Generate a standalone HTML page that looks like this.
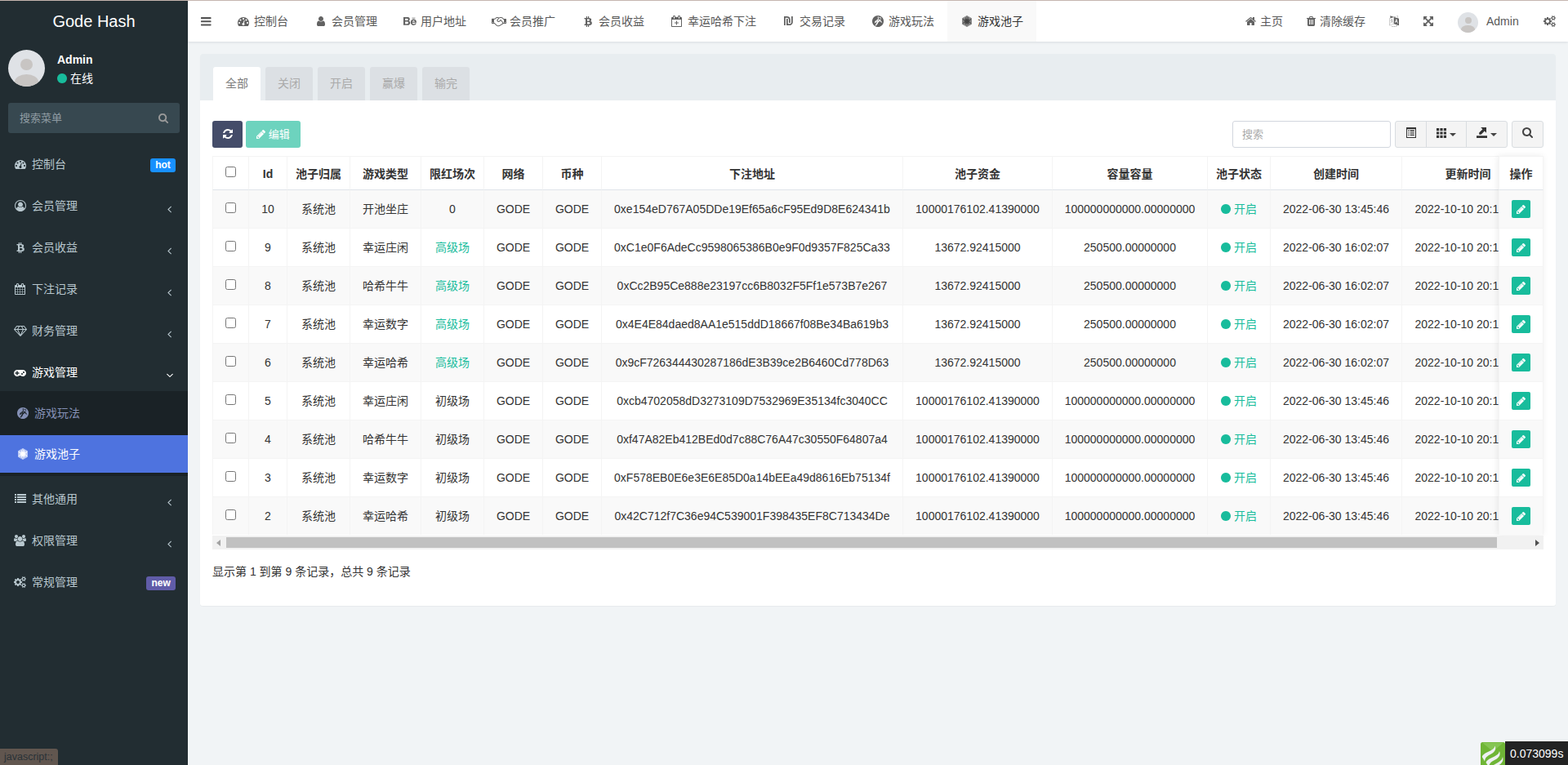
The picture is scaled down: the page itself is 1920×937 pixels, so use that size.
<!DOCTYPE html>
<html lang="zh-cn"><head><meta charset="utf-8"><title>Gode Hash</title>
<style>
*{box-sizing:border-box}
html,body{margin:0;padding:0}
body{width:1920px;height:937px;overflow:hidden;background:#f1f4f6;font-family:"Liberation Sans","Noto Sans CJK SC",sans-serif;font-size:14px;line-height:20px;color:#333;position:relative}
svg.i{display:inline-block;vertical-align:-2px;flex:none}
ul{list-style:none;margin:0;padding:0}
#topline{position:absolute;left:0;top:0;width:1920px;height:1px;background:#c5b5af;z-index:50}
/* sidebar */
#side{position:absolute;left:0;top:0;width:230px;height:937px;background:#222d32;color:#b8c7ce}
#side .logo{position:absolute;left:0;top:1px;width:230px;height:50px;line-height:50px;text-align:center;font-size:20px;color:#fff}
#side .av{position:absolute;left:10px;top:61px;width:45px;height:45px}
#side .nm{position:absolute;left:70px;top:63px;font-weight:bold;color:#fff;line-height:20px}
#side .st{position:absolute;left:70px;top:86px;color:#fff;line-height:20px;white-space:nowrap}
#side .st svg{margin-right:4px}
#side .sf{position:absolute;left:10px;top:126px;width:210px;height:37px;border-radius:3px;background:#374850;color:#8f9ca3;font-size:13px;line-height:37px;padding-left:14px}
#side .sf svg{position:absolute;left:184px;top:12px;fill:#9a9a9a}
#side .menu{position:absolute;left:0;top:172px;width:230px}
.menu>li{margin-top:7px;position:relative}
.menu>li>a{display:block;height:44px;padding:12px 5px 12px 15px;line-height:20px;white-space:nowrap;position:relative}
.menu>li>a .ib{display:inline-block;width:20px;text-align:center;margin-right:4px;vertical-align:top;height:20px;position:relative;top:0;left:-0.3px}
.menu>li.act>a{color:#fff;height:45px}
.menu>li.act+li{margin-top:6px}
.menu .ang{position:absolute;right:15px;top:16px;width:16px;text-align:center;height:20px;line-height:20px}
.menu .lb{position:absolute;right:15px;top:15px;height:17px;line-height:17px;border-radius:3px;color:#fff;font-weight:bold;font-size:12px;padding:0 6.2px;text-align:center}
.menu .hot{background:#1890ff}
.menu .new{background:#605ca8}
.sub{background:#1a2226;padding:4px 0}
.sub li a{display:block;height:46px;line-height:46px;padding-left:19px;color:#8490b5;white-space:nowrap}
.sub li+li{margin-top:4px}
.sub li a .ib{display:inline-block;width:18px;text-align:center;margin-right:5px}
.sub li.on a{background:#4e73df;color:#fff}
/* header */
#head{position:absolute;left:230px;top:1px;width:1690px;height:50px;background:#fff;box-shadow:0 1px 3px rgba(0,21,41,.10);color:#555}
#head .tog{position:absolute;left:0;top:0;width:44px;height:50px;color:#555}
#head .tog svg{position:absolute;left:16px;top:17.6px}
#tabs{position:absolute;left:44px;top:0;height:50px;display:flex}
#tabs li{height:50px;line-height:50px;padding:0 16px 0 15px;white-space:nowrap;color:#585858;display:flex;align-items:center}
#tabs li .ib{display:inline-block;width:18px;text-align:center;margin-right:4px;height:50px}
#tabs li.on{background:#f9f9f9;color:#333}
#head .r{position:absolute;top:0;height:50px;line-height:50px;white-space:nowrap;color:#585858}
#head .r svg.i,#tabs li svg.i{fill:#626262}
#tabs li.on svg.i{fill:#444}
#head .r svg{margin-right:1px}
/* content */
#panel{position:absolute;left:245px;top:66px;width:1660px;height:676px;background:#fff;border-radius:3px;box-shadow:0 1px 1px rgba(0,0,0,.04)}
#panel .ph{position:absolute;left:0;top:0;width:1660px;height:57px;background:#e8edf0;border-radius:3px 3px 0 0}
#ptabs{position:absolute;left:16px;top:16px;display:flex}
#ptabs li{width:58px;height:41px;line-height:40px;text-align:center;background:#dce0e4;color:#aaa;margin-right:6px;border-radius:3px 3px 0 0}
#ptabs li.on{background:#fff;color:#7b7b7b}
.btn{position:absolute;top:82px;height:33px;border-radius:3px;color:#fff;line-height:33px;text-align:center;white-space:nowrap}
#b1{left:15px;width:37px;background:#444c69}
#b2{left:56px;width:67px;background:#6dd3be;font-size:13px}
#sin{position:absolute;left:1264px;top:82px;width:194px;height:33px;border:1px solid #d2d6de;border-radius:3px;background:#fff;color:#aaa;padding-left:11px;line-height:31px;font-size:13px}
.bg{position:absolute;top:82px;height:33px;border:1px solid #d9dde1;background:#f4f4f4;color:#444}
.bg svg{position:absolute}
.caret{border-top-color:#333}
#g1{left:1463px;width:39px;border-radius:3px 0 0 3px}
#g2{left:1501px;width:50px}
#g3{left:1550px;width:51px;border-radius:0 3px 3px 0}
#g4{left:1606px;width:39px;border-radius:3px}
.caret{position:absolute;width:0;height:0;border-left:4px solid transparent;border-right:4px solid transparent;border-top:4px solid #444}
#tw{position:absolute;left:15px;top:125px;width:1630px;height:464px;overflow:hidden}
table{border-collapse:separate;border-spacing:0;table-layout:fixed}
#t{width:1618px}
td.ut{text-align:left;padding-left:15.5px}
th,td{border-left:1px solid #f4f4f4;border-top:1px solid #f4f4f4;text-align:center;padding:0;white-space:nowrap;overflow:hidden;vertical-align:middle}
th{height:41px;font-weight:bold;color:#333;background:#fff;padding-top:1px}
th .cb{top:-3px}
td{height:47px;color:#333}
tbody tr:first-child td{border-top-color:#dfe4e9}
tbody tr:nth-child(odd) td{background:#f9f9f9}
tbody tr:nth-child(even) td{background:#fff}
.g{color:#18bc9c}
.cb{display:inline-block;width:13px;height:13px;border:1px solid #767676;border-radius:2.5px;background:#fff;vertical-align:middle;position:relative;top:-3px}
.eb{display:inline-block;width:23px;height:22px;border-radius:2px;background:#18bc9c;color:#fff;line-height:22px;text-align:center;vertical-align:middle}
.eb svg{vertical-align:-2px}
#fx{position:absolute;left:1590px;top:125px;width:55px;height:464px;box-shadow:-1px 0 8px rgba(0,0,0,.08);background:#fff}
#fx table{width:55px}
#fx th,#fx td{border-right:1px solid #f4f4f4}
#sb{position:absolute;left:15px;top:590px;width:1630px;height:17px;background:#f1f1f1}
#sb .th{position:absolute;left:17px;top:2px;width:1556px;height:13px;background:#c1c1c1}
#sb .al{position:absolute;left:5px;top:4.5px;width:0;height:0;border-top:4px solid transparent;border-bottom:4px solid transparent;border-right:5px solid #a3a3a3}
#sb .ar{position:absolute;right:5px;top:4.5px;width:0;height:0;border-top:4px solid transparent;border-bottom:4px solid transparent;border-left:5px solid #505050}
#info{position:absolute;left:15px;top:624px;line-height:20px;color:#333;white-space:nowrap}
/* overlays */
#status{position:absolute;left:0;top:917px;width:71px;height:20px;background:#61564f;border-top-right-radius:3px;color:#2a3237;font-size:12.5px;line-height:21px;padding-left:5px;white-space:nowrap;z-index:60}
#trace{position:absolute;left:1843px;top:908px;width:77px;height:29px;background:#232323;color:#fff;font-size:14px;line-height:30px;padding-left:6px;white-space:nowrap;border-top:1px solid #fff;box-sizing:content-box;height:29px;top:907px}
#tlogo{position:absolute;left:1813px;top:909px;width:30px;height:28px;overflow:hidden}

.avt{border-radius:50%;overflow:hidden;background:#dfe2e6}
.avt span{position:absolute;display:block;background:#c8c5c3;border-radius:50%}
#side .av .hd{left:15.3px;top:10.5px;width:14.4px;height:14.4px}
#side .av .bd{left:8px;top:29.5px;width:29px;height:18px}
#head .avs{width:25px;height:25px}
#head .avs .hd{left:8.5px;top:5.8px;width:8px;height:8px}
#head .avs .bd{left:4.4px;top:16.4px;width:16.2px;height:10px}

</style></head>
<body>
<div id="topline"></div>
<aside id="side">
<div class="logo">Gode Hash</div>
<div class="av avt"><span class="hd"></span><span class="bd"></span></div>
<div class="nm">Admin</div>
<div class="st"><svg class="i " width="12.00" height="14" viewBox="-0.0 0 1536.0 1792" style="color:#18bc9c;fill:#18bc9c" fill="currentColor"><path transform="translate(0,1536) scale(1,-1)" d="M1536 640q0 -209 -103 -385.5t-279.5 -279.5t-385.5 -103t-385.5 103t-279.5 279.5t-103 385.5t103 385.5t279.5 279.5t385.5 103t385.5 -103t279.5 -279.5t103 -385.5z"/></svg>在线</div>
<div class="sf">搜索菜单<svg class="i " width="12.07" height="13" viewBox="-0.0 0 1664.0 1792" style="" fill="currentColor"><path transform="translate(0,1536) scale(1,-1)" d="M1152 704q0 185 -131.5 316.5t-316.5 131.5t-316.5 -131.5t-131.5 -316.5t131.5 -316.5t316.5 -131.5t316.5 131.5t131.5 316.5zM1664 -128q0 -52 -38 -90t-90 -38q-54 0 -90 38l-343 342q-179 -124 -399 -124q-143 0 -273.5 55.5t-225 150t-150 225t-55.5 273.5 t55.5 273.5t150 225t225 150t273.5 55.5t273.5 -55.5t225 -150t150 -225t55.5 -273.5q0 -220 -124 -399l343 -343q37 -37 37 -90z"/></svg></div>
<ul class="menu">
<li><a><span class="ib"><svg class="i " width="14.00" height="14" viewBox="-0.0 0 1792.0 1792" style="" fill="currentColor"><path transform="translate(0,1536) scale(1,-1)" d="M384 384q0 53 -37.5 90.5t-90.5 37.5t-90.5 -37.5t-37.5 -90.5t37.5 -90.5t90.5 -37.5t90.5 37.5t37.5 90.5zM576 832q0 53 -37.5 90.5t-90.5 37.5t-90.5 -37.5t-37.5 -90.5t37.5 -90.5t90.5 -37.5t90.5 37.5t37.5 90.5zM1004 351l101 382q6 26 -7.5 48.5t-38.5 29.5 t-48 -6.5t-30 -39.5l-101 -382q-60 -5 -107 -43.5t-63 -98.5q-20 -77 20 -146t117 -89t146 20t89 117q16 60 -6 117t-72 91zM1664 384q0 53 -37.5 90.5t-90.5 37.5t-90.5 -37.5t-37.5 -90.5t37.5 -90.5t90.5 -37.5t90.5 37.5t37.5 90.5zM1024 1024q0 53 -37.5 90.5 t-90.5 37.5t-90.5 -37.5t-37.5 -90.5t37.5 -90.5t90.5 -37.5t90.5 37.5t37.5 90.5zM1472 832q0 53 -37.5 90.5t-90.5 37.5t-90.5 -37.5t-37.5 -90.5t37.5 -90.5t90.5 -37.5t90.5 37.5t37.5 90.5zM1792 384q0 -261 -141 -483q-19 -29 -54 -29h-1402q-35 0 -54 29 q-141 221 -141 483q0 182 71 348t191 286t286 191t348 71t348 -71t286 -191t191 -286t71 -348z"/></svg></span><span>控制台</span><small class="lb hot">hot</small></a></li>
<li><a><span class="ib"><svg class="i " width="14.00" height="14" viewBox="-0.0 0 1792.0 1792" style="" fill="currentColor"><path transform="translate(0,1536) scale(1,-1)" d="M896 1536q182 0 348 -71t286 -191t191 -286t71 -348q0 -181 -70.5 -347t-190.5 -286t-286 -191.5t-349 -71.5t-349 71t-285.5 191.5t-190.5 286t-71 347.5t71 348t191 286t286 191t348 71zM1515 185q149 205 149 455q0 156 -61 298t-164 245t-245 164t-298 61t-298 -61 t-245 -164t-164 -245t-61 -298q0 -250 149 -455q66 327 306 327q131 -128 313 -128t313 128q240 0 306 -327zM1280 832q0 159 -112.5 271.5t-271.5 112.5t-271.5 -112.5t-112.5 -271.5t112.5 -271.5t271.5 -112.5t271.5 112.5t112.5 271.5z"/></svg></span><span>会员管理</span><span class="ang"><svg class="i " width="5.00" height="14" viewBox="-0.0 0 640.0 1792" style="" fill="currentColor"><path transform="translate(0,1536) scale(1,-1)" d="M627 992q0 -13 -10 -23l-393 -393l393 -393q10 -10 10 -23t-10 -23l-50 -50q-10 -10 -23 -10t-23 10l-466 466q-10 10 -10 23t10 23l466 466q10 10 23 10t23 -10l50 -50q10 -10 10 -23z"/></svg></span></a></li>
<li><a><span class="ib"><svg class="i " width="10.00" height="14" viewBox="-0.0 0 1280.0 1792" style="" fill="currentColor"><path transform="translate(0,1536) scale(1,-1)" d="M1167 896q18 -182 -131 -258q117 -28 175 -103t45 -214q-7 -71 -32.5 -125t-64.5 -89t-97 -58.5t-121.5 -34.5t-145.5 -15v-255h-154v251q-80 0 -122 1v-252h-154v255q-18 0 -54 0.5t-55 0.5h-200l31 183h111q50 0 58 51v402h16q-6 1 -16 1v287q-13 68 -89 68h-111v164 l212 -1q64 0 97 1v252h154v-247q82 2 122 2v245h154v-252q79 -7 140 -22.5t113 -45t82.5 -78t36.5 -114.5zM952 351q0 36 -15 64t-37 46t-57.5 30.5t-65.5 18.5t-74 9t-69 3t-64.5 -1t-47.5 -1v-338q8 0 37 -0.5t48 -0.5t53 1.5t58.5 4t57 8.5t55.5 14t47.5 21t39.5 30 t24.5 40t9.5 51zM881 827q0 33 -12.5 58.5t-30.5 42t-48 28t-55 16.5t-61.5 8t-58 2.5t-54 -1t-39.5 -0.5v-307q5 0 34.5 -0.5t46.5 0t50 2t55 5.5t51.5 11t48.5 18.5t37 27t27 38.5t9 51z"/></svg></span><span>会员收益</span><span class="ang"><svg class="i " width="5.00" height="14" viewBox="-0.0 0 640.0 1792" style="" fill="currentColor"><path transform="translate(0,1536) scale(1,-1)" d="M627 992q0 -13 -10 -23l-393 -393l393 -393q10 -10 10 -23t-10 -23l-50 -50q-10 -10 -23 -10t-23 10l-466 466q-10 10 -10 23t10 23l466 466q10 10 23 10t23 -10l50 -50q10 -10 10 -23z"/></svg></span></a></li>
<li><a><span class="ib"><svg class="i " width="13.00" height="14" viewBox="-0.0 0 1664.0 1792" style="" fill="currentColor"><path transform="translate(0,1536) scale(1,-1)" d="M128 -128h288v288h-288v-288zM480 -128h320v288h-320v-288zM128 224h288v320h-288v-320zM480 224h320v320h-320v-320zM128 608h288v288h-288v-288zM864 -128h320v288h-320v-288zM480 608h320v288h-320v-288zM1248 -128h288v288h-288v-288zM864 224h320v320h-320v-320z M512 1088v288q0 13 -9.5 22.5t-22.5 9.5h-64q-13 0 -22.5 -9.5t-9.5 -22.5v-288q0 -13 9.5 -22.5t22.5 -9.5h64q13 0 22.5 9.5t9.5 22.5zM1248 224h288v320h-288v-320zM864 608h320v288h-320v-288zM1248 608h288v288h-288v-288zM1280 1088v288q0 13 -9.5 22.5t-22.5 9.5h-64 q-13 0 -22.5 -9.5t-9.5 -22.5v-288q0 -13 9.5 -22.5t22.5 -9.5h64q13 0 22.5 9.5t9.5 22.5zM1664 1152v-1280q0 -52 -38 -90t-90 -38h-1408q-52 0 -90 38t-38 90v1280q0 52 38 90t90 38h128v96q0 66 47 113t113 47h64q66 0 113 -47t47 -113v-96h384v96q0 66 47 113t113 47 h64q66 0 113 -47t47 -113v-96h128q52 0 90 -38t38 -90z"/></svg></span><span>下注记录</span><span class="ang"><svg class="i " width="5.00" height="14" viewBox="-0.0 0 640.0 1792" style="" fill="currentColor"><path transform="translate(0,1536) scale(1,-1)" d="M627 992q0 -13 -10 -23l-393 -393l393 -393q10 -10 10 -23t-10 -23l-50 -50q-10 -10 -23 -10t-23 10l-466 466q-10 10 -10 23t10 23l466 466q10 10 23 10t23 -10l50 -50q10 -10 10 -23z"/></svg></span></a></li>
<li><a><span class="ib"><svg class="i " width="16.00" height="14" viewBox="-0.0 0 2048.0 1792" style="" fill="currentColor"><path transform="translate(0,1536) scale(1,-1)" d="M212 768l623 -665l-300 665h-323zM1024 -4l349 772h-698zM538 896l204 384h-262l-288 -384h346zM1213 103l623 665h-323zM683 896h682l-204 384h-274zM1510 896h346l-288 384h-262zM1651 1382l384 -512q14 -18 13 -41.5t-17 -40.5l-960 -1024q-18 -20 -47 -20t-47 20 l-960 1024q-16 17 -17 40.5t13 41.5l384 512q18 26 51 26h1152q33 0 51 -26z"/></svg></span><span>财务管理</span><span class="ang"><svg class="i " width="5.00" height="14" viewBox="-0.0 0 640.0 1792" style="" fill="currentColor"><path transform="translate(0,1536) scale(1,-1)" d="M627 992q0 -13 -10 -23l-393 -393l393 -393q10 -10 10 -23t-10 -23l-50 -50q-10 -10 -23 -10t-23 10l-466 466q-10 10 -10 23t10 23l466 466q10 10 23 10t23 -10l50 -50q10 -10 10 -23z"/></svg></span></a></li>
<li class="act"><a><span class="ib"><svg class="i " width="15.00" height="14" viewBox="-0.0 0 1920.0 1792" style="" fill="currentColor"><path transform="translate(0,1536) scale(1,-1)" d="M832 448v128q0 14 -9 23t-23 9h-192v192q0 14 -9 23t-23 9h-128q-14 0 -23 -9t-9 -23v-192h-192q-14 0 -23 -9t-9 -23v-128q0 -14 9 -23t23 -9h192v-192q0 -14 9 -23t23 -9h128q14 0 23 9t9 23v192h192q14 0 23 9t9 23zM1408 384q0 53 -37.5 90.5t-90.5 37.5t-90.5 -37.5 t-37.5 -90.5t37.5 -90.5t90.5 -37.5t90.5 37.5t37.5 90.5zM1664 640q0 53 -37.5 90.5t-90.5 37.5t-90.5 -37.5t-37.5 -90.5t37.5 -90.5t90.5 -37.5t90.5 37.5t37.5 90.5zM1920 512q0 -212 -150 -362t-362 -150q-192 0 -338 128h-220q-146 -128 -338 -128q-212 0 -362 150 t-150 362t150 362t362 150h896q212 0 362 -150t150 -362z"/></svg></span><span>游戏管理</span><span class="ang"><svg class="i " width="5.00" height="14" viewBox="-0.0 0 640.0 1792" style="transform:rotate(-90deg);position:relative;left:0.4px" fill="currentColor"><path transform="translate(0,1536) scale(1,-1)" d="M627 992q0 -13 -10 -23l-393 -393l393 -393q10 -10 10 -23t-10 -23l-50 -50q-10 -10 -23 -10t-23 10l-466 466q-10 10 -10 23t10 23l466 466q10 10 23 10t23 -10l50 -50q10 -10 10 -23z"/></svg></span></a>
<ul class="sub">
<li><a><span class="ib"><svg class="i " width="14.02" height="14" viewBox="-0.0 0 1794.0 1792" style="" fill="currentColor"><path transform="translate(0,1536) scale(1,-1)" d="M1291 1060q-15 17 -35 8.5t-26 -28.5t5 -38q14 -17 40 -14.5t34 20.5t-18 52zM895 814q-8 -8 -19.5 -8t-18.5 8q-8 8 -8 19t8 18q7 8 18.5 8t19.5 -8q7 -7 7 -18t-7 -19zM1060 740l-35 -35q-12 -13 -29.5 -13t-30.5 13l-38 38q-12 13 -12 30t12 30l35 35q12 12 29.5 12 t30.5 -12l38 -39q12 -12 12 -29.5t-12 -29.5zM951 870q-7 -8 -18.5 -8t-19.5 8q-7 8 -7 19t7 19q8 8 19 8t19 -8t8 -19t-8 -19zM1354 968q-34 -64 -107.5 -85.5t-127.5 16.5q-38 28 -61 66.5t-21 87.5t39 92t75.5 53t70.5 -5t70 -51q2 -2 13 -12.5t14.5 -13.5t13 -13.5 t12.5 -15.5t10 -15.5t8.5 -18t4 -18.5t1 -21t-5 -22t-9.5 -24zM1555 486q3 20 -8.5 34.5t-27.5 21.5t-33 17t-23 20q-40 71 -84 98.5t-113 11.5q19 13 40 18.5t33 4.5l12 -1q2 45 -34 90q6 20 6.5 40.5t-2.5 30.5l-3 10q43 24 71 65t34 91q10 84 -43 150.5t-137 76.5 q-60 7 -114 -18.5t-82 -74.5q-30 -51 -33.5 -101t14.5 -87t43.5 -64t56.5 -42q-45 4 -88 36t-57 88q-28 108 32 222q-16 21 -29 32q-50 0 -89 -19q19 24 42 37t36 14l13 1q0 50 -13 78q-10 21 -32.5 28.5t-47 -3.5t-37.5 -40q2 4 4 7q-7 -28 -6.5 -75.5t19 -117t48.5 -122.5 q-25 -14 -47 -36q-35 -16 -85.5 -70.5t-84.5 -101.5l-33 -46q-90 -34 -181 -125.5t-75 -162.5q1 -16 11 -27q-15 -12 -30 -30q-21 -25 -21 -54t21.5 -40t63.5 6q41 19 77 49.5t55 60.5q-2 2 -6.5 5t-20.5 7.5t-33 3.5q23 5 51 12.5t40 10t27.5 6t26 4t23.5 0.5q14 -7 22 34 q7 37 7 90q0 102 -40 150q106 -103 101 -219q-1 -29 -15 -50t-27 -27l-13 -6q-4 -7 -19 -32t-26 -45.5t-26.5 -52t-25 -61t-17 -63t-6.5 -66.5t10 -63q-35 54 -37 80q-22 -24 -34.5 -39t-33.5 -42t-30.5 -46t-16.5 -41t-0.5 -38t25.5 -27q45 -25 144 64t190.5 221.5 t122.5 228.5q86 52 145 115.5t86 119.5q47 -93 154 -178q104 -83 167 -80q39 2 46 43zM1794 640q0 -182 -71 -348t-191 -286t-286.5 -191t-348.5 -71t-348.5 71t-286.5 191t-191 286t-71 348t71 348t191 286t286.5 191t348.5 71t348.5 -71t286.5 -191t191 -286t71 -348z"/></svg></span>游戏玩法</a></li>
<li class="on"><a><span class="ib"><svg class="i " width="12.00" height="14" viewBox="-0.0 0 1536.0 1792" style="" fill="currentColor"><path transform="translate(0,1536) scale(1,-1)" d="M1322 640q0 -45 -5 -76l-236 14l224 -78q-19 -73 -58 -141l-214 103l177 -158q-44 -61 -107 -108l-157 178l103 -215q-61 -37 -140 -59l-79 228l14 -240q-38 -6 -76 -6t-76 6l14 238l-78 -226q-74 19 -140 59l103 215l-157 -178q-59 43 -108 108l178 158l-214 -104 q-39 69 -58 141l224 79l-237 -14q-5 42 -5 76q0 35 5 77l238 -14l-225 79q19 73 58 140l214 -104l-177 159q46 61 107 108l158 -178l-103 215q67 39 140 58l77 -224l-13 236q36 6 75 6q38 0 76 -6l-14 -237l78 225q74 -19 140 -59l-103 -214l158 178q61 -47 107 -108 l-177 -159l213 104q37 -62 58 -141l-224 -78l237 14q5 -31 5 -77zM1352 640q0 160 -78.5 295.5t-213 214t-292.5 78.5q-119 0 -227 -46.5t-186.5 -125t-124.5 -187.5t-46 -229q0 -119 46 -228t124.5 -187.5t186.5 -125t227 -46.5q158 0 292.5 78.5t213 214t78.5 294.5z M1425 1023v-766l-657 -383l-657 383v766l657 383zM768 -183l708 412v823l-708 411l-708 -411v-823zM1536 1088v-896l-768 -448l-768 448v896l768 448z"/></svg></span>游戏池子</a></li>
</ul></li>
<li><a><span class="ib"><svg class="i " width="14.00" height="14" viewBox="-0.0 0 1792.0 1792" style="" fill="currentColor"><path transform="translate(0,1536) scale(1,-1)" d="M256 224v-192q0 -13 -9.5 -22.5t-22.5 -9.5h-192q-13 0 -22.5 9.5t-9.5 22.5v192q0 13 9.5 22.5t22.5 9.5h192q13 0 22.5 -9.5t9.5 -22.5zM256 608v-192q0 -13 -9.5 -22.5t-22.5 -9.5h-192q-13 0 -22.5 9.5t-9.5 22.5v192q0 13 9.5 22.5t22.5 9.5h192q13 0 22.5 -9.5 t9.5 -22.5zM256 992v-192q0 -13 -9.5 -22.5t-22.5 -9.5h-192q-13 0 -22.5 9.5t-9.5 22.5v192q0 13 9.5 22.5t22.5 9.5h192q13 0 22.5 -9.5t9.5 -22.5zM1792 224v-192q0 -13 -9.5 -22.5t-22.5 -9.5h-1344q-13 0 -22.5 9.5t-9.5 22.5v192q0 13 9.5 22.5t22.5 9.5h1344 q13 0 22.5 -9.5t9.5 -22.5zM256 1376v-192q0 -13 -9.5 -22.5t-22.5 -9.5h-192q-13 0 -22.5 9.5t-9.5 22.5v192q0 13 9.5 22.5t22.5 9.5h192q13 0 22.5 -9.5t9.5 -22.5zM1792 608v-192q0 -13 -9.5 -22.5t-22.5 -9.5h-1344q-13 0 -22.5 9.5t-9.5 22.5v192q0 13 9.5 22.5 t22.5 9.5h1344q13 0 22.5 -9.5t9.5 -22.5zM1792 992v-192q0 -13 -9.5 -22.5t-22.5 -9.5h-1344q-13 0 -22.5 9.5t-9.5 22.5v192q0 13 9.5 22.5t22.5 9.5h1344q13 0 22.5 -9.5t9.5 -22.5zM1792 1376v-192q0 -13 -9.5 -22.5t-22.5 -9.5h-1344q-13 0 -22.5 9.5t-9.5 22.5v192 q0 13 9.5 22.5t22.5 9.5h1344q13 0 22.5 -9.5t9.5 -22.5z"/></svg></span><span>其他通用</span><span class="ang"><svg class="i " width="5.00" height="14" viewBox="-0.0 0 640.0 1792" style="" fill="currentColor"><path transform="translate(0,1536) scale(1,-1)" d="M627 992q0 -13 -10 -23l-393 -393l393 -393q10 -10 10 -23t-10 -23l-50 -50q-10 -10 -23 -10t-23 10l-466 466q-10 10 -10 23t10 23l466 466q10 10 23 10t23 -10l50 -50q10 -10 10 -23z"/></svg></span></a></li>
<li><a><span class="ib"><svg class="i " width="15.00" height="14" viewBox="-0.0 0 1920.0 1792" style="" fill="currentColor"><path transform="translate(0,1536) scale(1,-1)" d="M593 640q-162 -5 -265 -128h-134q-82 0 -138 40.5t-56 118.5q0 353 124 353q6 0 43.5 -21t97.5 -42.5t119 -21.5q67 0 133 23q-5 -37 -5 -66q0 -139 81 -256zM1664 3q0 -120 -73 -189.5t-194 -69.5h-874q-121 0 -194 69.5t-73 189.5q0 53 3.5 103.5t14 109t26.5 108.5 t43 97.5t62 81t85.5 53.5t111.5 20q10 0 43 -21.5t73 -48t107 -48t135 -21.5t135 21.5t107 48t73 48t43 21.5q61 0 111.5 -20t85.5 -53.5t62 -81t43 -97.5t26.5 -108.5t14 -109t3.5 -103.5zM640 1280q0 -106 -75 -181t-181 -75t-181 75t-75 181t75 181t181 75t181 -75 t75 -181zM1344 896q0 -159 -112.5 -271.5t-271.5 -112.5t-271.5 112.5t-112.5 271.5t112.5 271.5t271.5 112.5t271.5 -112.5t112.5 -271.5zM1920 671q0 -78 -56 -118.5t-138 -40.5h-134q-103 123 -265 128q81 117 81 256q0 29 -5 66q66 -23 133 -23q59 0 119 21.5t97.5 42.5 t43.5 21q124 0 124 -353zM1792 1280q0 -106 -75 -181t-181 -75t-181 75t-75 181t75 181t181 75t181 -75t75 -181z"/></svg></span><span>权限管理</span><span class="ang"><svg class="i " width="5.00" height="14" viewBox="-0.0 0 640.0 1792" style="" fill="currentColor"><path transform="translate(0,1536) scale(1,-1)" d="M627 992q0 -13 -10 -23l-393 -393l393 -393q10 -10 10 -23t-10 -23l-50 -50q-10 -10 -23 -10t-23 10l-466 466q-10 10 -10 23t10 23l466 466q10 10 23 10t23 -10l50 -50q10 -10 10 -23z"/></svg></span></a></li>
<li><a><span class="ib"><svg class="i " width="15.00" height="14" viewBox="-0.0 0 1920.0 1792" style="" fill="currentColor"><path transform="translate(0,1536) scale(1,-1)" d="M896 640q0 106 -75 181t-181 75t-181 -75t-75 -181t75 -181t181 -75t181 75t75 181zM1664 128q0 52 -38 90t-90 38t-90 -38t-38 -90q0 -53 37.5 -90.5t90.5 -37.5t90.5 37.5t37.5 90.5zM1664 1152q0 52 -38 90t-90 38t-90 -38t-38 -90q0 -53 37.5 -90.5t90.5 -37.5 t90.5 37.5t37.5 90.5zM1280 731v-185q0 -10 -7 -19.5t-16 -10.5l-155 -24q-11 -35 -32 -76q34 -48 90 -115q7 -11 7 -20q0 -12 -7 -19q-23 -30 -82.5 -89.5t-78.5 -59.5q-11 0 -21 7l-115 90q-37 -19 -77 -31q-11 -108 -23 -155q-7 -24 -30 -24h-186q-11 0 -20 7.5t-10 17.5 l-23 153q-34 10 -75 31l-118 -89q-7 -7 -20 -7q-11 0 -21 8q-144 133 -144 160q0 9 7 19q10 14 41 53t47 61q-23 44 -35 82l-152 24q-10 1 -17 9.5t-7 19.5v185q0 10 7 19.5t16 10.5l155 24q11 35 32 76q-34 48 -90 115q-7 11 -7 20q0 12 7 20q22 30 82 89t79 59q11 0 21 -7 l115 -90q34 18 77 32q11 108 23 154q7 24 30 24h186q11 0 20 -7.5t10 -17.5l23 -153q34 -10 75 -31l118 89q8 7 20 7q11 0 21 -8q144 -133 144 -160q0 -8 -7 -19q-12 -16 -42 -54t-45 -60q23 -48 34 -82l152 -23q10 -2 17 -10.5t7 -19.5zM1920 198v-140q0 -16 -149 -31 q-12 -27 -30 -52q51 -113 51 -138q0 -4 -4 -7q-122 -71 -124 -71q-8 0 -46 47t-52 68q-20 -2 -30 -2t-30 2q-14 -21 -52 -68t-46 -47q-2 0 -124 71q-4 3 -4 7q0 25 51 138q-18 25 -30 52q-149 15 -149 31v140q0 16 149 31q13 29 30 52q-51 113 -51 138q0 4 4 7q4 2 35 20 t59 34t30 16q8 0 46 -46.5t52 -67.5q20 2 30 2t30 -2q51 71 92 112l6 2q4 0 124 -70q4 -3 4 -7q0 -25 -51 -138q17 -23 30 -52q149 -15 149 -31zM1920 1222v-140q0 -16 -149 -31q-12 -27 -30 -52q51 -113 51 -138q0 -4 -4 -7q-122 -71 -124 -71q-8 0 -46 47t-52 68 q-20 -2 -30 -2t-30 2q-14 -21 -52 -68t-46 -47q-2 0 -124 71q-4 3 -4 7q0 25 51 138q-18 25 -30 52q-149 15 -149 31v140q0 16 149 31q13 29 30 52q-51 113 -51 138q0 4 4 7q4 2 35 20t59 34t30 16q8 0 46 -46.5t52 -67.5q20 2 30 2t30 -2q51 71 92 112l6 2q4 0 124 -70 q4 -3 4 -7q0 -25 -51 -138q17 -23 30 -52q149 -15 149 -31z"/></svg></span><span>常规管理</span><small class="lb new">new</small></a></li>
</ul>
</aside>
<header id="head">
<div class="tog"><svg class="i " width="12.51" height="14.6" viewBox="-0.0 0 1536.0 1792" style="" fill="currentColor"><path transform="translate(0,1536) scale(1,-1)" d="M1536 192v-128q0 -26 -19 -45t-45 -19h-1408q-26 0 -45 19t-19 45v128q0 26 19 45t45 19h1408q26 0 45 -19t19 -45zM1536 704v-128q0 -26 -19 -45t-45 -19h-1408q-26 0 -45 19t-19 45v128q0 26 19 45t45 19h1408q26 0 45 -19t19 -45zM1536 1216v-128q0 -26 -19 -45 t-45 -19h-1408q-26 0 -45 19t-19 45v128q0 26 19 45t45 19h1408q26 0 45 -19t19 -45z"/></svg></div>
<ul id="tabs">
<li><span class="ib"><svg class="i " width="14.00" height="14" viewBox="-0.0 0 1792.0 1792" style="" fill="currentColor"><path transform="translate(0,1536) scale(1,-1)" d="M384 384q0 53 -37.5 90.5t-90.5 37.5t-90.5 -37.5t-37.5 -90.5t37.5 -90.5t90.5 -37.5t90.5 37.5t37.5 90.5zM576 832q0 53 -37.5 90.5t-90.5 37.5t-90.5 -37.5t-37.5 -90.5t37.5 -90.5t90.5 -37.5t90.5 37.5t37.5 90.5zM1004 351l101 382q6 26 -7.5 48.5t-38.5 29.5 t-48 -6.5t-30 -39.5l-101 -382q-60 -5 -107 -43.5t-63 -98.5q-20 -77 20 -146t117 -89t146 20t89 117q16 60 -6 117t-72 91zM1664 384q0 53 -37.5 90.5t-90.5 37.5t-90.5 -37.5t-37.5 -90.5t37.5 -90.5t90.5 -37.5t90.5 37.5t37.5 90.5zM1024 1024q0 53 -37.5 90.5 t-90.5 37.5t-90.5 -37.5t-37.5 -90.5t37.5 -90.5t90.5 -37.5t90.5 37.5t37.5 90.5zM1472 832q0 53 -37.5 90.5t-90.5 37.5t-90.5 -37.5t-37.5 -90.5t37.5 -90.5t90.5 -37.5t90.5 37.5t37.5 90.5zM1792 384q0 -261 -141 -483q-19 -29 -54 -29h-1402q-35 0 -54 29 q-141 221 -141 483q0 182 71 348t191 286t286 191t348 71t348 -71t286 -191t191 -286t71 -348z"/></svg></span>控制台</li>
<li><span class="ib"><svg class="i " width="10.00" height="14" viewBox="-0.0 0 1280.0 1792" style="" fill="currentColor"><path transform="translate(0,1536) scale(1,-1)" d="M1280 137q0 -109 -62.5 -187t-150.5 -78h-854q-88 0 -150.5 78t-62.5 187q0 85 8.5 160.5t31.5 152t58.5 131t94 89t134.5 34.5q131 -128 313 -128t313 128q76 0 134.5 -34.5t94 -89t58.5 -131t31.5 -152t8.5 -160.5zM1024 1024q0 -159 -112.5 -271.5t-271.5 -112.5 t-271.5 112.5t-112.5 271.5t112.5 271.5t271.5 112.5t271.5 -112.5t112.5 -271.5z"/></svg></span>会员管理</li>
<li><span class="ib"><svg class="i " width="16.00" height="14" viewBox="-0.0 0 2048.0 1792" style="" fill="currentColor"><path transform="translate(0,1536) scale(1,-1)" d="M1848 1197h-511v-124h511v124zM1596 771q-90 0 -146 -52.5t-62 -142.5h408q-18 195 -200 195zM1612 186q63 0 122 32t76 87h221q-100 -307 -427 -307q-214 0 -340.5 132t-126.5 347q0 208 130.5 345.5t336.5 137.5q138 0 240.5 -68t153 -179t50.5 -248q0 -17 -2 -47h-658 q0 -111 57.5 -171.5t166.5 -60.5zM277 236h296q205 0 205 167q0 180 -199 180h-302v-347zM277 773h281q78 0 123.5 36.5t45.5 113.5q0 144 -190 144h-260v-294zM0 1282h594q87 0 155 -14t126.5 -47.5t90 -96.5t31.5 -154q0 -181 -172 -263q114 -32 172 -115t58 -204 q0 -75 -24.5 -136.5t-66 -103.5t-98.5 -71t-121 -42t-134 -13h-611v1260z"/></svg></span>用户地址</li>
<li><span class="ib"><svg class="i " width="18.00" height="14" viewBox="-0.0 0 2304.0 1792" style="" fill="currentColor"><path transform="translate(0,1536) scale(1,-1)" d="M192 384q40 0 56 32t0 64t-56 32t-56 -32t0 -64t56 -32zM1665 442q-10 13 -38.5 50t-41.5 54t-38 49t-42.5 53t-40.5 47t-45 49l-125 -140q-83 -94 -208.5 -92t-205.5 98q-57 69 -56.5 158t58.5 157l177 206q-22 11 -51 16.5t-47.5 6t-56.5 -0.5t-49 -1q-92 0 -158 -66 l-158 -158h-155v-544q5 0 21 0.5t22 0t19.5 -2t20.5 -4.5t17.5 -8.5t18.5 -13.5l297 -292q115 -111 227 -111q78 0 125 47q57 -20 112.5 8t72.5 85q74 -6 127 44q20 18 36 45.5t14 50.5q10 -10 43 -10q43 0 77 21t49.5 53t12 71.5t-30.5 73.5zM1824 384h96v512h-93l-157 180 q-66 76 -169 76h-167q-89 0 -146 -67l-209 -243q-28 -33 -28 -75t27 -75q43 -51 110 -52t111 49l193 218q25 23 53.5 21.5t47 -27t8.5 -56.5q16 -19 56 -63t60 -68q29 -36 82.5 -105.5t64.5 -84.5q52 -66 60 -140zM2112 384q40 0 56 32t0 64t-56 32t-56 -32t0 -64t56 -32z M2304 960v-640q0 -26 -19 -45t-45 -19h-434q-27 -65 -82 -106.5t-125 -51.5q-33 -48 -80.5 -81.5t-102.5 -45.5q-42 -53 -104.5 -81.5t-128.5 -24.5q-60 -34 -126 -39.5t-127.5 14t-117 53.5t-103.5 81l-287 282h-358q-26 0 -45 19t-19 45v672q0 26 19 45t45 19h421 q14 14 47 48t47.5 48t44 40t50.5 37.5t51 25.5t62 19.5t68 5.5h117q99 0 181 -56q82 56 181 56h167q35 0 67 -6t56.5 -14.5t51.5 -26.5t44.5 -31t43 -39.5t39 -42t41 -48t41.5 -48.5h355q26 0 45 -19t19 -45z"/></svg></span>会员推广</li>
<li><span class="ib"><svg class="i " width="10.00" height="14" viewBox="-0.0 0 1280.0 1792" style="" fill="currentColor"><path transform="translate(0,1536) scale(1,-1)" d="M1167 896q18 -182 -131 -258q117 -28 175 -103t45 -214q-7 -71 -32.5 -125t-64.5 -89t-97 -58.5t-121.5 -34.5t-145.5 -15v-255h-154v251q-80 0 -122 1v-252h-154v255q-18 0 -54 0.5t-55 0.5h-200l31 183h111q50 0 58 51v402h16q-6 1 -16 1v287q-13 68 -89 68h-111v164 l212 -1q64 0 97 1v252h154v-247q82 2 122 2v245h154v-252q79 -7 140 -22.5t113 -45t82.5 -78t36.5 -114.5zM952 351q0 36 -15 64t-37 46t-57.5 30.5t-65.5 18.5t-74 9t-69 3t-64.5 -1t-47.5 -1v-338q8 0 37 -0.5t48 -0.5t53 1.5t58.5 4t57 8.5t55.5 14t47.5 21t39.5 30 t24.5 40t9.5 51zM881 827q0 33 -12.5 58.5t-30.5 42t-48 28t-55 16.5t-61.5 8t-58 2.5t-54 -1t-39.5 -0.5v-307q5 0 34.5 -0.5t46.5 0t50 2t55 5.5t51.5 11t48.5 18.5t37 27t27 38.5t9 51z"/></svg></span>会员收益</li>
<li><span class="ib"><svg class="i " width="14.00" height="14" viewBox="-0.0 0 1792.0 1792" style="" fill="currentColor"><path transform="translate(0,1536) scale(1,-1)" d="M1536 1280q52 0 90 -38t38 -90v-1280q0 -52 -38 -90t-90 -38h-1408q-52 0 -90 38t-38 90v1280q0 52 38 90t90 38h128v96q0 66 47 113t113 47h64q66 0 113 -47t47 -113v-96h384v96q0 66 47 113t113 47h64q66 0 113 -47t47 -113v-96h128zM1152 1376v-288q0 -14 9 -23t23 -9 h64q14 0 23 9t9 23v288q0 14 -9 23t-23 9h-64q-14 0 -23 -9t-9 -23zM384 1376v-288q0 -14 9 -23t23 -9h64q14 0 23 9t9 23v288q0 14 -9 23t-23 9h-64q-14 0 -23 -9t-9 -23zM1536 -128v1024h-1408v-1024h1408zM896 448h224q14 0 23 -9t9 -23v-64q0 -14 -9 -23t-23 -9h-224 v-224q0 -14 -9 -23t-23 -9h-64q-14 0 -23 9t-9 23v224h-224q-14 0 -23 9t-9 23v64q0 14 9 23t23 9h224v224q0 14 9 23t23 9h64q14 0 23 -9t9 -23v-224z"/></svg></span>幸运哈希下注</li>
<li><span class="ib"><svg class="i " width="12.00" height="14" viewBox="-0.0 0 1536.0 1792" style="" fill="currentColor"><path transform="translate(0,1536) scale(1,-1)" d="M992 912v-496q0 -14 -9 -23t-23 -9h-160q-14 0 -23 9t-9 23v496q0 112 -80 192t-192 80h-272v-1152q0 -14 -9 -23t-23 -9h-160q-14 0 -23 9t-9 23v1344q0 14 9 23t23 9h464q135 0 249 -66.5t180.5 -180.5t66.5 -249zM1376 1376v-880q0 -135 -66.5 -249t-180.5 -180.5 t-249 -66.5h-464q-14 0 -23 9t-9 23v960q0 14 9 23t23 9h160q14 0 23 -9t9 -23v-768h272q112 0 192 80t80 192v880q0 14 9 23t23 9h160q14 0 23 -9t9 -23z"/></svg></span>交易记录</li>
<li><span class="ib"><svg class="i " width="14.02" height="14" viewBox="-0.0 0 1794.0 1792" style="" fill="currentColor"><path transform="translate(0,1536) scale(1,-1)" d="M1291 1060q-15 17 -35 8.5t-26 -28.5t5 -38q14 -17 40 -14.5t34 20.5t-18 52zM895 814q-8 -8 -19.5 -8t-18.5 8q-8 8 -8 19t8 18q7 8 18.5 8t19.5 -8q7 -7 7 -18t-7 -19zM1060 740l-35 -35q-12 -13 -29.5 -13t-30.5 13l-38 38q-12 13 -12 30t12 30l35 35q12 12 29.5 12 t30.5 -12l38 -39q12 -12 12 -29.5t-12 -29.5zM951 870q-7 -8 -18.5 -8t-19.5 8q-7 8 -7 19t7 19q8 8 19 8t19 -8t8 -19t-8 -19zM1354 968q-34 -64 -107.5 -85.5t-127.5 16.5q-38 28 -61 66.5t-21 87.5t39 92t75.5 53t70.5 -5t70 -51q2 -2 13 -12.5t14.5 -13.5t13 -13.5 t12.5 -15.5t10 -15.5t8.5 -18t4 -18.5t1 -21t-5 -22t-9.5 -24zM1555 486q3 20 -8.5 34.5t-27.5 21.5t-33 17t-23 20q-40 71 -84 98.5t-113 11.5q19 13 40 18.5t33 4.5l12 -1q2 45 -34 90q6 20 6.5 40.5t-2.5 30.5l-3 10q43 24 71 65t34 91q10 84 -43 150.5t-137 76.5 q-60 7 -114 -18.5t-82 -74.5q-30 -51 -33.5 -101t14.5 -87t43.5 -64t56.5 -42q-45 4 -88 36t-57 88q-28 108 32 222q-16 21 -29 32q-50 0 -89 -19q19 24 42 37t36 14l13 1q0 50 -13 78q-10 21 -32.5 28.5t-47 -3.5t-37.5 -40q2 4 4 7q-7 -28 -6.5 -75.5t19 -117t48.5 -122.5 q-25 -14 -47 -36q-35 -16 -85.5 -70.5t-84.5 -101.5l-33 -46q-90 -34 -181 -125.5t-75 -162.5q1 -16 11 -27q-15 -12 -30 -30q-21 -25 -21 -54t21.5 -40t63.5 6q41 19 77 49.5t55 60.5q-2 2 -6.5 5t-20.5 7.5t-33 3.5q23 5 51 12.5t40 10t27.5 6t26 4t23.5 0.5q14 -7 22 34 q7 37 7 90q0 102 -40 150q106 -103 101 -219q-1 -29 -15 -50t-27 -27l-13 -6q-4 -7 -19 -32t-26 -45.5t-26.5 -52t-25 -61t-17 -63t-6.5 -66.5t10 -63q-35 54 -37 80q-22 -24 -34.5 -39t-33.5 -42t-30.5 -46t-16.5 -41t-0.5 -38t25.5 -27q45 -25 144 64t190.5 221.5 t122.5 228.5q86 52 145 115.5t86 119.5q47 -93 154 -178q104 -83 167 -80q39 2 46 43zM1794 640q0 -182 -71 -348t-191 -286t-286.5 -191t-348.5 -71t-348.5 71t-286.5 191t-191 286t-71 348t71 348t191 286t286.5 191t348.5 71t348.5 -71t286.5 -191t191 -286t71 -348z"/></svg></span>游戏玩法</li>
<li class="on"><span class="ib"><svg class="i " width="12.00" height="14" viewBox="-0.0 0 1536.0 1792" style="" fill="currentColor"><path transform="translate(0,1536) scale(1,-1)" d="M1322 640q0 -45 -5 -76l-236 14l224 -78q-19 -73 -58 -141l-214 103l177 -158q-44 -61 -107 -108l-157 178l103 -215q-61 -37 -140 -59l-79 228l14 -240q-38 -6 -76 -6t-76 6l14 238l-78 -226q-74 19 -140 59l103 215l-157 -178q-59 43 -108 108l178 158l-214 -104 q-39 69 -58 141l224 79l-237 -14q-5 42 -5 76q0 35 5 77l238 -14l-225 79q19 73 58 140l214 -104l-177 159q46 61 107 108l158 -178l-103 215q67 39 140 58l77 -224l-13 236q36 6 75 6q38 0 76 -6l-14 -237l78 225q74 -19 140 -59l-103 -214l158 178q61 -47 107 -108 l-177 -159l213 104q37 -62 58 -141l-224 -78l237 14q5 -31 5 -77zM1352 640q0 160 -78.5 295.5t-213 214t-292.5 78.5q-119 0 -227 -46.5t-186.5 -125t-124.5 -187.5t-46 -229q0 -119 46 -228t124.5 -187.5t186.5 -125t227 -46.5q158 0 292.5 78.5t213 214t78.5 294.5z M1425 1023v-766l-657 -383l-657 383v766l657 383zM768 -183l708 412v823l-708 411l-708 -411v-823zM1536 1088v-896l-768 -448l-768 448v896l768 448z"/></svg></span>游戏池子</li>
</ul>
<div class="r" style="left:1295px"><svg class="i " width="13.00" height="14" viewBox="-0.0 0 1664.0 1792" style="" fill="currentColor"><path transform="translate(0,1536) scale(1,-1)" d="M1408 544v-480q0 -26 -19 -45t-45 -19h-384v384h-256v-384h-384q-26 0 -45 19t-19 45v480q0 1 0.5 3t0.5 3l575 474l575 -474q1 -2 1 -6zM1631 613l-62 -74q-8 -9 -21 -11h-3q-13 0 -21 7l-692 577l-692 -577q-12 -8 -24 -7q-13 2 -21 11l-62 74q-8 10 -7 23.5t11 21.5 l719 599q32 26 76 26t76 -26l244 -204v195q0 14 9 23t23 9h192q14 0 23 -9t9 -23v-408l219 -182q10 -8 11 -21.5t-7 -23.5z"/></svg> 主页</div>
<div class="r" style="left:1370px"><svg class="i " width="11.00" height="14" viewBox="-0.0 0 1408.0 1792" style="" fill="currentColor"><path transform="translate(0,1536) scale(1,-1)" d="M512 160v704q0 14 -9 23t-23 9h-64q-14 0 -23 -9t-9 -23v-704q0 -14 9 -23t23 -9h64q14 0 23 9t9 23zM768 160v704q0 14 -9 23t-23 9h-64q-14 0 -23 -9t-9 -23v-704q0 -14 9 -23t23 -9h64q14 0 23 9t9 23zM1024 160v704q0 14 -9 23t-23 9h-64q-14 0 -23 -9t-9 -23v-704 q0 -14 9 -23t23 -9h64q14 0 23 9t9 23zM480 1152h448l-48 117q-7 9 -17 11h-317q-10 -2 -17 -11zM1408 1120v-64q0 -14 -9 -23t-23 -9h-96v-948q0 -83 -47 -143.5t-113 -60.5h-832q-66 0 -113 58.5t-47 141.5v952h-96q-14 0 -23 9t-9 23v64q0 14 9 23t23 9h309l70 167 q15 37 54 63t79 26h320q40 0 79 -26t54 -63l70 -167h309q14 0 23 -9t9 -23z"/></svg> 清除缓存</div>
<div class="r" style="left:1471px"><svg class="i " width="12.00" height="14" viewBox="-0.0 0 1536.0 1792" style="" fill="currentColor"><path transform="translate(0,1536) scale(1,-1)" d="M654 458q-1 -3 -12.5 0.5t-31.5 11.5l-20 9q-44 20 -87 49q-7 5 -41 31.5t-38 28.5q-67 -103 -134 -181q-81 -95 -105 -110q-4 -2 -19.5 -4t-18.5 0q6 4 82 92q21 24 85.5 115t78.5 118q17 30 51 98.5t36 77.5q-8 1 -110 -33q-8 -2 -27.5 -7.5t-34.5 -9.5t-17 -5 q-2 -2 -2 -10.5t-1 -9.5q-5 -10 -31 -15q-23 -7 -47 0q-18 4 -28 21q-4 6 -5 23q6 2 24.5 5t29.5 6q58 16 105 32q100 35 102 35q10 2 43 19.5t44 21.5q9 3 21.5 8t14.5 5.5t6 -0.5q2 -12 -1 -33q0 -2 -12.5 -27t-26.5 -53.5t-17 -33.5q-25 -50 -77 -131l64 -28 q12 -6 74.5 -32t67.5 -28q4 -1 10.5 -25.5t4.5 -30.5zM449 944q3 -15 -4 -28q-12 -23 -50 -38q-30 -12 -60 -12q-26 3 -49 26q-14 15 -18 41l1 3q3 -3 19.5 -5t26.5 0t58 16q36 12 55 14q17 0 21 -17zM1147 815l63 -227l-139 42zM39 15l694 232v1032l-694 -233v-1031z M1280 332l102 -31l-181 657l-100 31l-216 -536l102 -31l45 110l211 -65zM777 1294l573 -184v380zM1088 -29l158 -13l-54 -160l-40 66q-130 -83 -276 -108q-58 -12 -91 -12h-84q-79 0 -199.5 39t-183.5 85q-8 7 -8 16q0 8 5 13.5t13 5.5q4 0 18 -7.5t30.5 -16.5t20.5 -11 q73 -37 159.5 -61.5t157.5 -24.5q95 0 167 14.5t157 50.5q15 7 30.5 15.5t34 19t28.5 16.5zM1536 1050v-1079l-774 246q-14 -6 -375 -127.5t-368 -121.5q-13 0 -18 13q0 1 -1 3v1078q3 9 4 10q5 6 20 11q107 36 149 50v384l558 -198q2 0 160.5 55t316 108.5t161.5 53.5 q20 0 20 -21v-418z"/></svg></div>
<div class="r" style="left:1513px"><svg class="i " width="12.00" height="14" viewBox="-0.0 0 1536.0 1792" style="" fill="currentColor"><path transform="translate(0,1536) scale(1,-1)" d="M1283 995l-355 -355l355 -355l144 144q29 31 70 14q39 -17 39 -59v-448q0 -26 -19 -45t-45 -19h-448q-42 0 -59 40q-17 39 14 69l144 144l-355 355l-355 -355l144 -144q31 -30 14 -69q-17 -40 -59 -40h-448q-26 0 -45 19t-19 45v448q0 42 40 59q39 17 69 -14l144 -144 l355 355l-355 355l-144 -144q-19 -19 -45 -19q-12 0 -24 5q-40 17 -40 59v448q0 26 19 45t45 19h448q42 0 59 -40q17 -39 -14 -69l-144 -144l355 -355l355 355l-144 144q-31 30 -14 69q17 40 59 40h448q26 0 45 -19t19 -45v-448q0 -42 -39 -59q-13 -5 -25 -5q-26 0 -45 19z "/></svg></div>
<div class="r avt avs" style="left:1555px;top:14px"><span class="hd"></span><span class="bd"></span></div>
<div class="r" style="left:1590px">Admin</div>
<div class="r" style="left:1660px"><svg class="i " width="15.00" height="14" viewBox="-0.0 0 1920.0 1792" style="" fill="currentColor"><path transform="translate(0,1536) scale(1,-1)" d="M896 640q0 106 -75 181t-181 75t-181 -75t-75 -181t75 -181t181 -75t181 75t75 181zM1664 128q0 52 -38 90t-90 38t-90 -38t-38 -90q0 -53 37.5 -90.5t90.5 -37.5t90.5 37.5t37.5 90.5zM1664 1152q0 52 -38 90t-90 38t-90 -38t-38 -90q0 -53 37.5 -90.5t90.5 -37.5 t90.5 37.5t37.5 90.5zM1280 731v-185q0 -10 -7 -19.5t-16 -10.5l-155 -24q-11 -35 -32 -76q34 -48 90 -115q7 -11 7 -20q0 -12 -7 -19q-23 -30 -82.5 -89.5t-78.5 -59.5q-11 0 -21 7l-115 90q-37 -19 -77 -31q-11 -108 -23 -155q-7 -24 -30 -24h-186q-11 0 -20 7.5t-10 17.5 l-23 153q-34 10 -75 31l-118 -89q-7 -7 -20 -7q-11 0 -21 8q-144 133 -144 160q0 9 7 19q10 14 41 53t47 61q-23 44 -35 82l-152 24q-10 1 -17 9.5t-7 19.5v185q0 10 7 19.5t16 10.5l155 24q11 35 32 76q-34 48 -90 115q-7 11 -7 20q0 12 7 20q22 30 82 89t79 59q11 0 21 -7 l115 -90q34 18 77 32q11 108 23 154q7 24 30 24h186q11 0 20 -7.5t10 -17.5l23 -153q34 -10 75 -31l118 89q8 7 20 7q11 0 21 -8q144 -133 144 -160q0 -8 -7 -19q-12 -16 -42 -54t-45 -60q23 -48 34 -82l152 -23q10 -2 17 -10.5t7 -19.5zM1920 198v-140q0 -16 -149 -31 q-12 -27 -30 -52q51 -113 51 -138q0 -4 -4 -7q-122 -71 -124 -71q-8 0 -46 47t-52 68q-20 -2 -30 -2t-30 2q-14 -21 -52 -68t-46 -47q-2 0 -124 71q-4 3 -4 7q0 25 51 138q-18 25 -30 52q-149 15 -149 31v140q0 16 149 31q13 29 30 52q-51 113 -51 138q0 4 4 7q4 2 35 20 t59 34t30 16q8 0 46 -46.5t52 -67.5q20 2 30 2t30 -2q51 71 92 112l6 2q4 0 124 -70q4 -3 4 -7q0 -25 -51 -138q17 -23 30 -52q149 -15 149 -31zM1920 1222v-140q0 -16 -149 -31q-12 -27 -30 -52q51 -113 51 -138q0 -4 -4 -7q-122 -71 -124 -71q-8 0 -46 47t-52 68 q-20 -2 -30 -2t-30 2q-14 -21 -52 -68t-46 -47q-2 0 -124 71q-4 3 -4 7q0 25 51 138q-18 25 -30 52q-149 15 -149 31v140q0 16 149 31q13 29 30 52q-51 113 -51 138q0 4 4 7q4 2 35 20t59 34t30 16q8 0 46 -46.5t52 -67.5q20 2 30 2t30 -2q51 71 92 112l6 2q4 0 124 -70 q4 -3 4 -7q0 -25 -51 -138q17 -23 30 -52q149 -15 149 -31z"/></svg></div>
</header>
<section id="panel">
<div class="ph"></div>
<ul id="ptabs"><li class="on">全部</li><li>关闭</li><li>开启</li><li>赢爆</li><li>输完</li></ul>
<div class="btn" id="b1"><svg class="i " width="12.00" height="14" viewBox="-0.0 0 1536.0 1792" style="" fill="currentColor"><path transform="translate(0,1536) scale(1,-1)" d="M1511 480q0 -5 -1 -7q-64 -268 -268 -434.5t-478 -166.5q-146 0 -282.5 55t-243.5 157l-129 -129q-19 -19 -45 -19t-45 19t-19 45v448q0 26 19 45t45 19h448q26 0 45 -19t19 -45t-19 -45l-137 -137q71 -66 161 -102t187 -36q134 0 250 65t186 179q11 17 53 117 q8 23 30 23h192q13 0 22.5 -9.5t9.5 -22.5zM1536 1280v-448q0 -26 -19 -45t-45 -19h-448q-26 0 -45 19t-19 45t19 45l138 138q-148 137 -349 137q-134 0 -250 -65t-186 -179q-11 -17 -53 -117q-8 -23 -30 -23h-199q-13 0 -22.5 9.5t-9.5 22.5v7q65 268 270 434.5t480 166.5 q146 0 284 -55.5t245 -156.5l130 129q19 19 45 19t45 -19t19 -45z"/></svg></div>
<div class="btn" id="b2"><svg class="i " width="11.14" height="13" viewBox="-0.0 0 1536.0 1792" style="" fill="currentColor"><path transform="translate(0,1536) scale(1,-1)" d="M363 0l91 91l-235 235l-91 -91v-107h128v-128h107zM886 928q0 22 -22 22q-10 0 -17 -7l-542 -542q-7 -7 -7 -17q0 -22 22 -22q10 0 17 7l542 542q7 7 7 17zM832 1120l416 -416l-832 -832h-416v416zM1515 1024q0 -53 -37 -90l-166 -166l-416 416l166 165q36 38 90 38 q53 0 91 -38l235 -234q37 -39 37 -91z"/></svg> 编辑</div>
<div id="sin">搜索</div>
<div class="bg" id="g1"><svg class="gi" width="12" height="13" viewBox="0 0 12 13" style="left:13px;top:7px"><path fill="#333" fill-rule="evenodd" d="M0 0h12v13H0zM1 2.2v9.8h10V2.2zM2.2 3.6h1.3v1.3H2.2zM4.6 3.6h5.2v1.3H4.6zM2.2 6.2h1.3v1.3H2.2zM4.6 6.2h5.2v1.3H4.6zM2.2 8.8h1.3v1.3H2.2zM4.6 8.8h5.2v1.3H4.6z"/></svg></div>
<div class="bg" id="g2"><svg class="gi" width="12" height="12" viewBox="0 0 12 12" style="left:12px;top:8px"><path fill="#333" d="M0 0h3.2v3.2H0zM4.4 0h3.2v3.2H4.4zM8.8 0H12v3.2H8.8zM0 4.4h3.2v3.2H0zM4.4 4.4h3.2v3.2H4.4zM8.8 4.4H12v3.2H8.8zM0 8.8h3.2V12H0zM4.4 8.8h3.2V12H4.4zM8.8 8.8H12V12H8.8z"/></svg><span class="caret" style="left:28px;top:14px"></span></div>
<div class="bg" id="g3"><svg class="gi" width="13" height="13" viewBox="0 0 13 13" style="left:12px;top:7px"><path fill="#333" d="M0 10.2h13V13H0zM5.2 0H12v6.8L9.8 4.6 5.6 8.8H3.2V6.4L7.4 2.2z"/></svg><span class="caret" style="left:29px;top:14px"></span></div>
<div class="bg" id="g4"><svg class="i " width="13.00" height="14" viewBox="-0.0 0 1664.0 1792" style="left:12px;top:6px" fill="currentColor"><path transform="translate(0,1536) scale(1,-1)" d="M1152 704q0 185 -131.5 316.5t-316.5 131.5t-316.5 -131.5t-131.5 -316.5t131.5 -316.5t316.5 -131.5t316.5 131.5t131.5 316.5zM1664 -128q0 -52 -38 -90t-90 -38q-54 0 -90 38l-343 342q-179 -124 -399 -124q-143 0 -273.5 55.5t-225 150t-150 225t-55.5 273.5 t55.5 273.5t150 225t225 150t273.5 55.5t273.5 -55.5t225 -150t150 -225t55.5 -273.5q0 -220 -124 -399l343 -343q37 -37 37 -90z"/></svg></div>
<div id="tw"><table id="t">
<colgroup><col style="width:44px"><col style="width:47px"><col style="width:77px"><col style="width:87px"><col style="width:77px"><col style="width:72px"><col style="width:72px"><col style="width:369px"><col style="width:183px"><col style="width:190px"><col style="width:77px"><col style="width:161px"><col style="width:162px"></colgroup>
<thead><tr><th><span class="cb"></span></th><th>Id</th><th>池子归属</th><th>游戏类型</th><th>限红场次</th><th>网络</th><th>币种</th><th>下注地址</th><th>池子资金</th><th>容量容量</th><th>池子状态</th><th>创建时间</th><th>更新时间</th></tr></thead>
<tbody>
<tr><td><span class="cb"></span></td><td>10</td><td>系统池</td><td>开池坐庄</td><td>0</td><td>GODE</td><td>GODE</td><td>0xe154eD767A05DDe19Ef65a6cF95Ed9D8E624341b</td><td>10000176102.41390000</td><td>100000000000.00000000</td><td class="g"><svg class="i " width="12.00" height="14" viewBox="-0.0 0 1536.0 1792" style="" fill="currentColor"><path transform="translate(0,1536) scale(1,-1)" d="M1536 640q0 -209 -103 -385.5t-279.5 -279.5t-385.5 -103t-385.5 103t-279.5 279.5t-103 385.5t103 385.5t279.5 279.5t385.5 103t385.5 -103t279.5 -279.5t103 -385.5z"/></svg> 开启</td><td>2022-06-30 13:45:46</td><td class="ut">2022-10-10 20:1</td></tr>
<tr><td><span class="cb"></span></td><td>9</td><td>系统池</td><td>幸运庄闲</td><td class="g">高级场</td><td>GODE</td><td>GODE</td><td>0xC1e0F6AdeCc9598065386B0e9F0d9357F825Ca33</td><td>13672.92415000</td><td>250500.00000000</td><td class="g"><svg class="i " width="12.00" height="14" viewBox="-0.0 0 1536.0 1792" style="" fill="currentColor"><path transform="translate(0,1536) scale(1,-1)" d="M1536 640q0 -209 -103 -385.5t-279.5 -279.5t-385.5 -103t-385.5 103t-279.5 279.5t-103 385.5t103 385.5t279.5 279.5t385.5 103t385.5 -103t279.5 -279.5t103 -385.5z"/></svg> 开启</td><td>2022-06-30 16:02:07</td><td class="ut">2022-10-10 20:1</td></tr>
<tr><td><span class="cb"></span></td><td>8</td><td>系统池</td><td>哈希牛牛</td><td class="g">高级场</td><td>GODE</td><td>GODE</td><td>0xCc2B95Ce888e23197cc6B8032F5Ff1e573B7e267</td><td>13672.92415000</td><td>250500.00000000</td><td class="g"><svg class="i " width="12.00" height="14" viewBox="-0.0 0 1536.0 1792" style="" fill="currentColor"><path transform="translate(0,1536) scale(1,-1)" d="M1536 640q0 -209 -103 -385.5t-279.5 -279.5t-385.5 -103t-385.5 103t-279.5 279.5t-103 385.5t103 385.5t279.5 279.5t385.5 103t385.5 -103t279.5 -279.5t103 -385.5z"/></svg> 开启</td><td>2022-06-30 16:02:07</td><td class="ut">2022-10-10 20:1</td></tr>
<tr><td><span class="cb"></span></td><td>7</td><td>系统池</td><td>幸运数字</td><td class="g">高级场</td><td>GODE</td><td>GODE</td><td>0x4E4E84daed8AA1e515ddD18667f08Be34Ba619b3</td><td>13672.92415000</td><td>250500.00000000</td><td class="g"><svg class="i " width="12.00" height="14" viewBox="-0.0 0 1536.0 1792" style="" fill="currentColor"><path transform="translate(0,1536) scale(1,-1)" d="M1536 640q0 -209 -103 -385.5t-279.5 -279.5t-385.5 -103t-385.5 103t-279.5 279.5t-103 385.5t103 385.5t279.5 279.5t385.5 103t385.5 -103t279.5 -279.5t103 -385.5z"/></svg> 开启</td><td>2022-06-30 16:02:07</td><td class="ut">2022-10-10 20:1</td></tr>
<tr><td><span class="cb"></span></td><td>6</td><td>系统池</td><td>幸运哈希</td><td class="g">高级场</td><td>GODE</td><td>GODE</td><td>0x9cF726344430287186dE3B39ce2B6460Cd778D63</td><td>13672.92415000</td><td>250500.00000000</td><td class="g"><svg class="i " width="12.00" height="14" viewBox="-0.0 0 1536.0 1792" style="" fill="currentColor"><path transform="translate(0,1536) scale(1,-1)" d="M1536 640q0 -209 -103 -385.5t-279.5 -279.5t-385.5 -103t-385.5 103t-279.5 279.5t-103 385.5t103 385.5t279.5 279.5t385.5 103t385.5 -103t279.5 -279.5t103 -385.5z"/></svg> 开启</td><td>2022-06-30 16:02:07</td><td class="ut">2022-10-10 20:1</td></tr>
<tr><td><span class="cb"></span></td><td>5</td><td>系统池</td><td>幸运庄闲</td><td>初级场</td><td>GODE</td><td>GODE</td><td>0xcb4702058dD3273109D7532969E35134fc3040CC</td><td>10000176102.41390000</td><td>100000000000.00000000</td><td class="g"><svg class="i " width="12.00" height="14" viewBox="-0.0 0 1536.0 1792" style="" fill="currentColor"><path transform="translate(0,1536) scale(1,-1)" d="M1536 640q0 -209 -103 -385.5t-279.5 -279.5t-385.5 -103t-385.5 103t-279.5 279.5t-103 385.5t103 385.5t279.5 279.5t385.5 103t385.5 -103t279.5 -279.5t103 -385.5z"/></svg> 开启</td><td>2022-06-30 13:45:46</td><td class="ut">2022-10-10 20:1</td></tr>
<tr><td><span class="cb"></span></td><td>4</td><td>系统池</td><td>哈希牛牛</td><td>初级场</td><td>GODE</td><td>GODE</td><td>0xf47A82Eb412BEd0d7c88C76A47c30550F64807a4</td><td>10000176102.41390000</td><td>100000000000.00000000</td><td class="g"><svg class="i " width="12.00" height="14" viewBox="-0.0 0 1536.0 1792" style="" fill="currentColor"><path transform="translate(0,1536) scale(1,-1)" d="M1536 640q0 -209 -103 -385.5t-279.5 -279.5t-385.5 -103t-385.5 103t-279.5 279.5t-103 385.5t103 385.5t279.5 279.5t385.5 103t385.5 -103t279.5 -279.5t103 -385.5z"/></svg> 开启</td><td>2022-06-30 13:45:46</td><td class="ut">2022-10-10 20:1</td></tr>
<tr><td><span class="cb"></span></td><td>3</td><td>系统池</td><td>幸运数字</td><td>初级场</td><td>GODE</td><td>GODE</td><td>0xF578EB0E6e3E6E85D0a14bEEa49d8616Eb75134f</td><td>10000176102.41390000</td><td>100000000000.00000000</td><td class="g"><svg class="i " width="12.00" height="14" viewBox="-0.0 0 1536.0 1792" style="" fill="currentColor"><path transform="translate(0,1536) scale(1,-1)" d="M1536 640q0 -209 -103 -385.5t-279.5 -279.5t-385.5 -103t-385.5 103t-279.5 279.5t-103 385.5t103 385.5t279.5 279.5t385.5 103t385.5 -103t279.5 -279.5t103 -385.5z"/></svg> 开启</td><td>2022-06-30 13:45:46</td><td class="ut">2022-10-10 20:1</td></tr>
<tr><td><span class="cb"></span></td><td>2</td><td>系统池</td><td>幸运哈希</td><td>初级场</td><td>GODE</td><td>GODE</td><td>0x42C712f7C36e94C539001F398435EF8C713434De</td><td>10000176102.41390000</td><td>100000000000.00000000</td><td class="g"><svg class="i " width="12.00" height="14" viewBox="-0.0 0 1536.0 1792" style="" fill="currentColor"><path transform="translate(0,1536) scale(1,-1)" d="M1536 640q0 -209 -103 -385.5t-279.5 -279.5t-385.5 -103t-385.5 103t-279.5 279.5t-103 385.5t103 385.5t279.5 279.5t385.5 103t385.5 -103t279.5 -279.5t103 -385.5z"/></svg> 开启</td><td>2022-06-30 13:45:46</td><td class="ut">2022-10-10 20:1</td></tr>
</tbody></table></div>
<div id="fx"><table><thead><tr><th>操作</th></tr></thead><tbody>
<tr><td><span class="eb"><svg class="i " width="11.14" height="13" viewBox="-0.0 0 1536.0 1792" style="" fill="currentColor"><path transform="translate(0,1536) scale(1,-1)" d="M363 0l91 91l-235 235l-91 -91v-107h128v-128h107zM886 928q0 22 -22 22q-10 0 -17 -7l-542 -542q-7 -7 -7 -17q0 -22 22 -22q10 0 17 7l542 542q7 7 7 17zM832 1120l416 -416l-832 -832h-416v416zM1515 1024q0 -53 -37 -90l-166 -166l-416 416l166 165q36 38 90 38 q53 0 91 -38l235 -234q37 -39 37 -91z"/></svg></span></td></tr>
<tr><td><span class="eb"><svg class="i " width="11.14" height="13" viewBox="-0.0 0 1536.0 1792" style="" fill="currentColor"><path transform="translate(0,1536) scale(1,-1)" d="M363 0l91 91l-235 235l-91 -91v-107h128v-128h107zM886 928q0 22 -22 22q-10 0 -17 -7l-542 -542q-7 -7 -7 -17q0 -22 22 -22q10 0 17 7l542 542q7 7 7 17zM832 1120l416 -416l-832 -832h-416v416zM1515 1024q0 -53 -37 -90l-166 -166l-416 416l166 165q36 38 90 38 q53 0 91 -38l235 -234q37 -39 37 -91z"/></svg></span></td></tr>
<tr><td><span class="eb"><svg class="i " width="11.14" height="13" viewBox="-0.0 0 1536.0 1792" style="" fill="currentColor"><path transform="translate(0,1536) scale(1,-1)" d="M363 0l91 91l-235 235l-91 -91v-107h128v-128h107zM886 928q0 22 -22 22q-10 0 -17 -7l-542 -542q-7 -7 -7 -17q0 -22 22 -22q10 0 17 7l542 542q7 7 7 17zM832 1120l416 -416l-832 -832h-416v416zM1515 1024q0 -53 -37 -90l-166 -166l-416 416l166 165q36 38 90 38 q53 0 91 -38l235 -234q37 -39 37 -91z"/></svg></span></td></tr>
<tr><td><span class="eb"><svg class="i " width="11.14" height="13" viewBox="-0.0 0 1536.0 1792" style="" fill="currentColor"><path transform="translate(0,1536) scale(1,-1)" d="M363 0l91 91l-235 235l-91 -91v-107h128v-128h107zM886 928q0 22 -22 22q-10 0 -17 -7l-542 -542q-7 -7 -7 -17q0 -22 22 -22q10 0 17 7l542 542q7 7 7 17zM832 1120l416 -416l-832 -832h-416v416zM1515 1024q0 -53 -37 -90l-166 -166l-416 416l166 165q36 38 90 38 q53 0 91 -38l235 -234q37 -39 37 -91z"/></svg></span></td></tr>
<tr><td><span class="eb"><svg class="i " width="11.14" height="13" viewBox="-0.0 0 1536.0 1792" style="" fill="currentColor"><path transform="translate(0,1536) scale(1,-1)" d="M363 0l91 91l-235 235l-91 -91v-107h128v-128h107zM886 928q0 22 -22 22q-10 0 -17 -7l-542 -542q-7 -7 -7 -17q0 -22 22 -22q10 0 17 7l542 542q7 7 7 17zM832 1120l416 -416l-832 -832h-416v416zM1515 1024q0 -53 -37 -90l-166 -166l-416 416l166 165q36 38 90 38 q53 0 91 -38l235 -234q37 -39 37 -91z"/></svg></span></td></tr>
<tr><td><span class="eb"><svg class="i " width="11.14" height="13" viewBox="-0.0 0 1536.0 1792" style="" fill="currentColor"><path transform="translate(0,1536) scale(1,-1)" d="M363 0l91 91l-235 235l-91 -91v-107h128v-128h107zM886 928q0 22 -22 22q-10 0 -17 -7l-542 -542q-7 -7 -7 -17q0 -22 22 -22q10 0 17 7l542 542q7 7 7 17zM832 1120l416 -416l-832 -832h-416v416zM1515 1024q0 -53 -37 -90l-166 -166l-416 416l166 165q36 38 90 38 q53 0 91 -38l235 -234q37 -39 37 -91z"/></svg></span></td></tr>
<tr><td><span class="eb"><svg class="i " width="11.14" height="13" viewBox="-0.0 0 1536.0 1792" style="" fill="currentColor"><path transform="translate(0,1536) scale(1,-1)" d="M363 0l91 91l-235 235l-91 -91v-107h128v-128h107zM886 928q0 22 -22 22q-10 0 -17 -7l-542 -542q-7 -7 -7 -17q0 -22 22 -22q10 0 17 7l542 542q7 7 7 17zM832 1120l416 -416l-832 -832h-416v416zM1515 1024q0 -53 -37 -90l-166 -166l-416 416l166 165q36 38 90 38 q53 0 91 -38l235 -234q37 -39 37 -91z"/></svg></span></td></tr>
<tr><td><span class="eb"><svg class="i " width="11.14" height="13" viewBox="-0.0 0 1536.0 1792" style="" fill="currentColor"><path transform="translate(0,1536) scale(1,-1)" d="M363 0l91 91l-235 235l-91 -91v-107h128v-128h107zM886 928q0 22 -22 22q-10 0 -17 -7l-542 -542q-7 -7 -7 -17q0 -22 22 -22q10 0 17 7l542 542q7 7 7 17zM832 1120l416 -416l-832 -832h-416v416zM1515 1024q0 -53 -37 -90l-166 -166l-416 416l166 165q36 38 90 38 q53 0 91 -38l235 -234q37 -39 37 -91z"/></svg></span></td></tr>
<tr><td><span class="eb"><svg class="i " width="11.14" height="13" viewBox="-0.0 0 1536.0 1792" style="" fill="currentColor"><path transform="translate(0,1536) scale(1,-1)" d="M363 0l91 91l-235 235l-91 -91v-107h128v-128h107zM886 928q0 22 -22 22q-10 0 -17 -7l-542 -542q-7 -7 -7 -17q0 -22 22 -22q10 0 17 7l542 542q7 7 7 17zM832 1120l416 -416l-832 -832h-416v416zM1515 1024q0 -53 -37 -90l-166 -166l-416 416l166 165q36 38 90 38 q53 0 91 -38l235 -234q37 -39 37 -91z"/></svg></span></td></tr>
</tbody></table></div>
<div id="sb"><div class="al"></div><div class="th"></div><div class="ar"></div></div>
<div id="info">显示第 1 到第 9 条记录，总共 9 条记录</div>
</section>
<div id="status">javascript:;</div>
<div id="tlogo"><svg width="30" height="30" viewBox="0 0 30 30"><rect width="30" height="34" rx="2.5" fill="#6fb536"/><path d="M2 0.5H28L15 11.5Z" fill="#85c553"/><path d="M17.5 4.5C19.5 9 17 12.5 12 15C8 17 5.5 19 5 23.5L1.8 18C3 14 8 12.5 12 10.5C15 9 17 7.5 17.5 4.5Z" fill="#eef0f3"/><path d="M23 11C25 16 22 19.5 17 22C13 24 10.5 26 10 30L6.5 25C8 21 13 19.5 17 17.5C20.5 15.5 22.5 14 23 11Z" fill="#eef0f3"/><path d="M27 18C28.5 23 26 26 22 28.5C20 29.5 18.5 30 18 31L13 31C14.5 28 19 26.5 22 24.5C25 22.5 26.5 21 27 18Z" fill="#eef0f3"/></svg></div>
<div id="trace">0.073099s</div>

</body></html>
